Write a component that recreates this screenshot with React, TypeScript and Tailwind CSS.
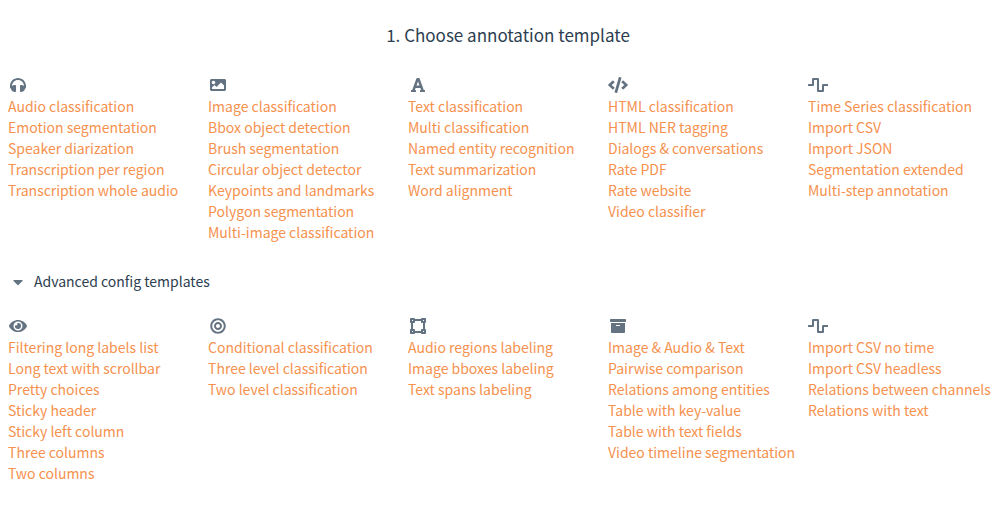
import React, { useState } from "react";
import type { IconType } from "react-icons";
import {
  FaArchive,
  FaBullseye,
  FaCaretDown,
  FaCaretRight,
  FaCode,
  FaEye,
  FaFont,
  FaHeadphones,
  FaImage,
  FaVectorSquare,
  FaWaveSquare,
} from "react-icons/fa";

type Group = { id: string; icon: IconType; items: string[] };

const basic: Group[] = [
  {
    id: "Audio",
    icon: FaHeadphones,
    items: [
      "Audio classification",
      "Emotion segmentation",
      "Speaker diarization",
      "Transcription per region",
      "Transcription whole audio",
    ],
  },
  {
    id: "Image",
    icon: FaImage,
    items: [
      "Image classification",
      "Bbox object detection",
      "Brush segmentation",
      "Circular object detector",
      "Keypoints and landmarks",
      "Polygon segmentation",
      "Multi-image classification",
    ],
  },
  {
    id: "Text",
    icon: FaFont,
    items: [
      "Text classification",
      "Multi classification",
      "Named entity recognition",
      "Text summarization",
      "Word alignment",
    ],
  },
  {
    id: "HTML",
    icon: FaCode,
    items: [
      "HTML classification",
      "HTML NER tagging",
      "Dialogs & conversations",
      "Rate PDF",
      "Rate website",
      "Video classifier",
    ],
  },
  {
    id: "Series",
    icon: FaWaveSquare,
    items: [
      "Time Series classification",
      "Import CSV",
      "Import JSON",
      "Segmentation extended",
      "Multi-step annotation",
    ],
  },
];

const advanced: Group[] = [
  {
    id: "Layout",
    icon: FaEye,
    items: [
      "Filtering long labels list",
      "Long text with scrollbar",
      "Pretty choices",
      "Sticky header",
      "Sticky left column",
      "Three columns",
      "Two columns",
    ],
  },
  {
    id: "Nested",
    icon: FaBullseye,
    items: [
      "Conditional classification",
      "Three level classification",
      "Two level classification",
    ],
  },
  {
    id: "Regions",
    icon: FaVectorSquare,
    items: [
      "Audio regions labeling",
      "Image bboxes labeling",
      "Text spans labeling",
    ],
  },
  {
    id: "Other",
    icon: FaArchive,
    items: [
      "Image & Audio & Text",
      "Pairwise comparison",
      "Relations among entities",
      "Table with key-value",
      "Table with text fields",
      "Video timeline segmentation",
    ],
  },
  {
    id: "Channels",
    icon: FaWaveSquare,
    items: [
      "Import CSV no time",
      "Import CSV headless",
      "Relations between channels",
      "Relations with text",
    ],
  },
];

function TemplateGrid({ groups }: { groups: Group[] }) {
  return (
    <div className="grid grid-cols-5">
      {groups.map(({ id, icon: Icon, items }) => (
        <section key={id}>
          <div className="flex h-[21px] items-center pb-0.5 text-[#647382]">
            <Icon className="h-4 w-5" aria-hidden="true" />
          </div>
          <ul>
            {items.map((item) => (
              <li key={item} className="whitespace-nowrap">
                <a href="#" className="text-[#f6914e] hover:underline">
                  {item}
                </a>
              </li>
            ))}
          </ul>
        </section>
      ))}
    </div>
  );
}

export default function App() {
  const [open, setOpen] = useState(true);
  const Caret = open ? FaCaretDown : FaCaretRight;
  return (
    <main className="overflow-hidden bg-white pb-10 pl-2 font-['Noto_Sans_CJK_SC',sans-serif] text-[14px] leading-[21px] text-[#2c3e50]">
      <div className="-mr-1.5">
        <h1 className="pt-[25px] text-center text-[17px] leading-5">
          1. Choose annotation template
        </h1>
        <div className="pt-[30px]">
          <TemplateGrid groups={basic} />
        </div>
        <button
          type="button"
          aria-expanded={open}
          onClick={() => setOpen(!open)}
          className="mt-7 flex items-center gap-1.5"
        >
          <Caret className="h-4 w-5 text-[#647382]" aria-hidden="true" />
          Advanced config templates
        </button>
        {open && (
          <div className="pt-6">
            <TemplateGrid groups={advanced} />
          </div>
        )}
      </div>
    </main>
  );
}
